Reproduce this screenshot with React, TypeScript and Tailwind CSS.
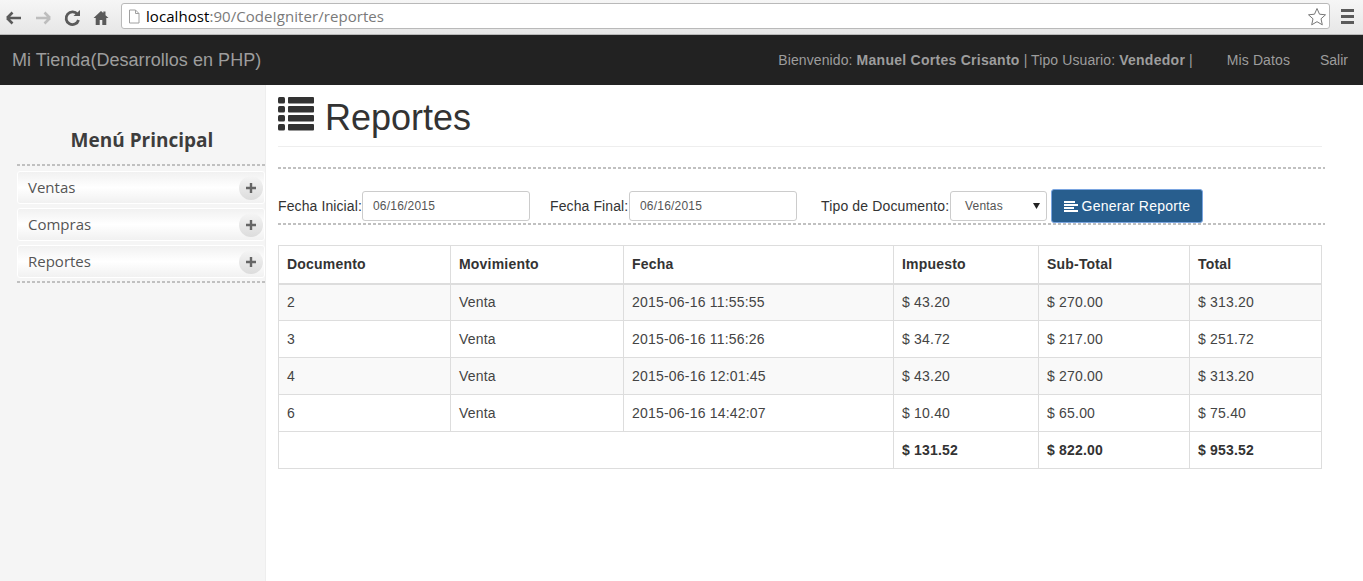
import React from "react";

const rows = [
  ["2", "Venta", "2015-06-16 11:55:55", "$ 43.20", "$ 270.00", "$ 313.20"],
  ["3", "Venta", "2015-06-16 11:56:26", "$ 34.72", "$ 217.00", "$ 251.72"],
  ["4", "Venta", "2015-06-16 12:01:45", "$ 43.20", "$ 270.00", "$ 313.20"],
  ["6", "Venta", "2015-06-16 14:42:07", "$ 10.40", "$ 65.00", "$ 75.40"],
];
const heads = ["Documento", "Movimiento", "Fecha", "Impuesto", "Sub-Total", "Total"];

function Dashed({ className = "" }: { className?: string }) {
  return <div className={"h-[2px] bg-[repeating-linear-gradient(90deg,#c0c0c0_0,#c0c0c0_3px,transparent_3px,transparent_5px)] " + className} />;
}

function Toolbar() {
  return (
    <div className="h-[35px] flex items-center bg-gradient-to-b from-[#f6f6f6] to-[#e6e6e6] shadow-[inset_0_-1px_0_#b8b8b8]">
      <div className="w-[121px] shrink-0 flex items-center h-full">
        <svg width="121" height="32" viewBox="0 0 121 32">
          <path d="M7 16h14M7 16l5.500-5.500M7 16l5.500 5.500" fill="none" stroke="#5a5a5a" strokeWidth="2.600" />
          <path d="M36 16h14M50 16l-5.500-5.500M50 16l-5.500 5.500" fill="none" stroke="#bdbdbd" strokeWidth="2.600" />
          <path d="M77.500 12.500a6.300 6.300 0 1 0 1 5.500" fill="none" stroke="#5a5a5a" strokeWidth="2.800" />
          <path d="M73.500 14h6.500V8z" fill="#5a5a5a" />
          <path d="M101 9l-7.500 7h2.200v7h4v-5h2.600v5h4v-7h2.200l-3-2.800V9.500h-2.200v1.600z" fill="#5a5a5a" />
        </svg>
      </div>
      <div className="w-[1209px] h-[26px] -mt-[3px] bg-white border border-[#b9b9b9] rounded-[3px] flex items-center pl-[6px] pr-[2px] font-['Open_Sans',sans-serif] text-[15px] tracking-[0.06px]">
        <svg width="12" height="15" viewBox="0 0 12 15" className="shrink-0">
          <path d="M1.500 1h6l3.500 3.500V14h-9.500z M7.500 1v3.500H11" fill="#fff" stroke="#a0a0a0" />
        </svg>
        <span className="ml-[6px] text-black">localhost</span>
        <span className="text-[#7a7a7a]">:90/CodeIgniter/reportes</span>
        <svg width="20" height="19" viewBox="0 0 20 19" className="ml-auto">
          <path d="M10 1.500l2.500 5.700 6 .6-4.500 4 1.300 6L10 14.700l-5.300 3.100 1.300-6-4.500-4 6-.6z" fill="#fff" stroke="#777" />
        </svg>
      </div>
      <div className="w-[33px] flex flex-col items-center gap-[3px] -mt-[3px] pl-[1px]">
        <div className="w-[13px] h-[3px] bg-[#5a5a5a]" />
        <div className="w-[13px] h-[3px] bg-[#5a5a5a]" />
        <div className="w-[13px] h-[3px] bg-[#5a5a5a]" />
      </div>
    </div>
  );
}

function Navbar() {
  return (
    <div className="h-[50px] bg-[#222222] flex items-center justify-between pl-[12px] pr-[15px] text-[#9d9d9d] text-[14px]">
      <span className="text-[18px] tracking-[0.04px]">Mi Tienda(Desarrollos en PHP)</span>
      <div className="flex items-center">
        <span className="tracking-[0.1px]">
          Bienvenido: <b className="tracking-[0.27px]">Manuel Cortes Crisanto</b> | Tipo Usuario: <b className="tracking-[0.27px]">Vendedor</b> |
        </span>
        <span className="ml-[34px] tracking-[0.1px]">Mis Datos</span>
        <span className="ml-[30px]">Salir</span>
      </div>
    </div>
  );
}

function MenuItem({ label }: { label: string }) {
  return (
    <div className="h-[33px] flex items-center justify-between rounded-[3px] border border-white bg-gradient-to-b from-[#f1f1f1] via-white to-[#f1f1f1] pl-[10px] pr-[1px] font-['Open_Sans',sans-serif] text-[15px] text-[#555]">
      <span>{label}</span>
      <span className="w-[24px] h-[24px] rounded-full bg-gradient-to-b from-[#f5f5f5] to-[#dcdcdc] flex items-center justify-center">
        <svg width="12" height="12" viewBox="0 0 12 12">
          <path d="M6 1v10M1 6h10" stroke="#666" strokeWidth="2.400" />
        </svg>
      </span>
    </div>
  );
}

function Sidebar() {
  return (
    <aside className="w-[266px] shrink-0 bg-[#f5f5f5] border-r border-[#eeeeee] pl-[17px]">
      <h3 className="mt-[41px] h-[28px] leading-[28px] text-center pl-[2px] font-['Open_Sans',sans-serif] font-bold text-[#3d3d3d] text-[19px]">
        Menú Principal
      </h3>
      <Dashed className="mt-[10px]" />
      <div className="mt-[5px] flex flex-col gap-[4px]">
        <MenuItem label="Ventas" />
        <MenuItem label="Compras" />
        <MenuItem label="Reportes" />
      </div>
      <Dashed className="mt-[3px]" />
    </aside>
  );
}

function Field({ label, labelClass, className = "" }: { label: string; labelClass: string; className?: string }) {
  return (
    <div className={"flex items-center " + className}>
      <span className={"tracking-[0.1px] whitespace-nowrap " + labelClass}>{label}</span>
      <input
        readOnly
        value="06/16/2015"
        className="w-[168px] h-[30px] ml-[1px] px-[10px] bg-white border border-[#cccccc] rounded-[3px] text-[12px] tracking-[0.2px] text-[#555] outline-none font-['Liberation_Sans',sans-serif]"
      />
    </div>
  );
}

function Cell({ children, bold = false }: { children: React.ReactNode; bold?: boolean }) {
  return (
    <td className={"border border-[#dddddd] px-[8px] h-[37px] p-0 align-middle " + (bold ? "font-bold tracking-[0.2px]" : "tracking-[0.2px] text-[#444444]")}>
      {children}
    </td>
  );
}

export default function App() {
  return (
    <div className="h-[581px] overflow-hidden flex flex-col bg-white font-['Liberation_Sans',Arial,sans-serif] text-[14px] text-[#333333]">
      <Toolbar />
      <Navbar />
      <div className="flex-1 flex">
        <Sidebar />
        <main className="pl-[12px] w-[1059px] shrink-0">
          <div className="w-[1044px] h-[62px] border-b border-[#eeeeee] flex items-center gap-[11px] pt-[4px]">
            <svg width="36" height="34" viewBox="0 0 36 34" fill="#333333" className="-mt-[7px]">
              <rect x="0" y="0" width="7" height="6.500" rx="1.500" />
              <rect x="10" y="0" width="26" height="6.500" rx="1" />
              <rect x="0" y="9" width="7" height="6.500" rx="1.500" />
              <rect x="10" y="9" width="26" height="6.500" rx="1" />
              <rect x="0" y="18" width="7" height="6.500" rx="1.500" />
              <rect x="10" y="18" width="26" height="6.500" rx="1" />
              <rect x="0" y="27" width="7" height="6.500" rx="1.500" />
              <rect x="10" y="27" width="26" height="6.500" rx="1" />
            </svg>
            <h1 className="text-[36px] leading-[40px] text-[#333333]">Reportes</h1>
          </div>
          <Dashed className="mt-[20px] w-[1047px]" />
          <div className="mt-[19px] h-[36px] w-[1047px] flex items-center">
            <Field label="Fecha Inicial:" labelClass="w-[83px]" />
            <Field label="Fecha Final:" labelClass="w-[78px]" className="ml-[20px]" />
            <div className="flex items-center ml-[24px]">
              <span className="w-[128px] tracking-[0.15px] whitespace-nowrap">Tipo de Documento:</span>
              <div className="ml-[1px] w-[97px] h-[30px] flex items-center justify-between pl-[14px] pr-[6px] border border-[#cccccc] rounded-[3px] text-[12px] tracking-[0.2px] text-[#555]">
                <span>Ventas</span>
                <svg width="7" height="6" viewBox="0 0 7 6"><path d="M0 0h7L3.500 6z" fill="#222" /></svg>
              </div>
            </div>
            <button className="ml-[4px] w-[152px] h-[34px] flex items-center justify-center gap-[4px] rounded-[3px] bg-[#285e8e] border border-[#7aa5e0] text-white text-[14px] tracking-[0.25px]">
              <svg width="14" height="11" viewBox="0 0 14 11" fill="#fff">
                <rect x="0" y="0" width="11" height="2" />
                <rect x="0" y="3" width="14" height="2" />
                <rect x="0" y="6" width="10" height="2" />
                <rect x="0" y="9" width="14" height="2" />
              </svg>
              <span>Generar Reporte</span>
            </button>
          </div>
          <Dashed className="-mt-[1px] w-[1047px]" />
          <table className="mt-[20px] w-[1043px] table-fixed border-collapse border border-[#dddddd]">
            <colgroup>
              <col className="w-[172px]" />
              <col className="w-[173px]" />
              <col className="w-[270px]" />
              <col className="w-[145px]" />
              <col className="w-[151px]" />
              <col className="w-[132px]" />
            </colgroup>
            <thead>
              <tr>
                {heads.map((h) => (
                  <th key={h} className="border border-b-2 border-[#dddddd] px-[8px] h-[38px] text-left font-bold tracking-[0.2px]">
                    {h}
                  </th>
                ))}
              </tr>
            </thead>
            <tbody>
              {rows.map((r, i) => (
                <tr key={r[0]} className={i % 2 === 0 ? "bg-[#f9f9f9]" : ""}>
                  {r.map((c, j) => (
                    <Cell key={j}>{c}</Cell>
                  ))}
                </tr>
              ))}
              <tr>
                <td colSpan={3} className="border border-[#dddddd] h-[37px]" />
                <Cell bold>$ 131.52</Cell>
                <Cell bold>$ 822.00</Cell>
                <Cell bold>$ 953.52</Cell>
              </tr>
            </tbody>
          </table>
        </main>
      </div>
    </div>
  );
}
